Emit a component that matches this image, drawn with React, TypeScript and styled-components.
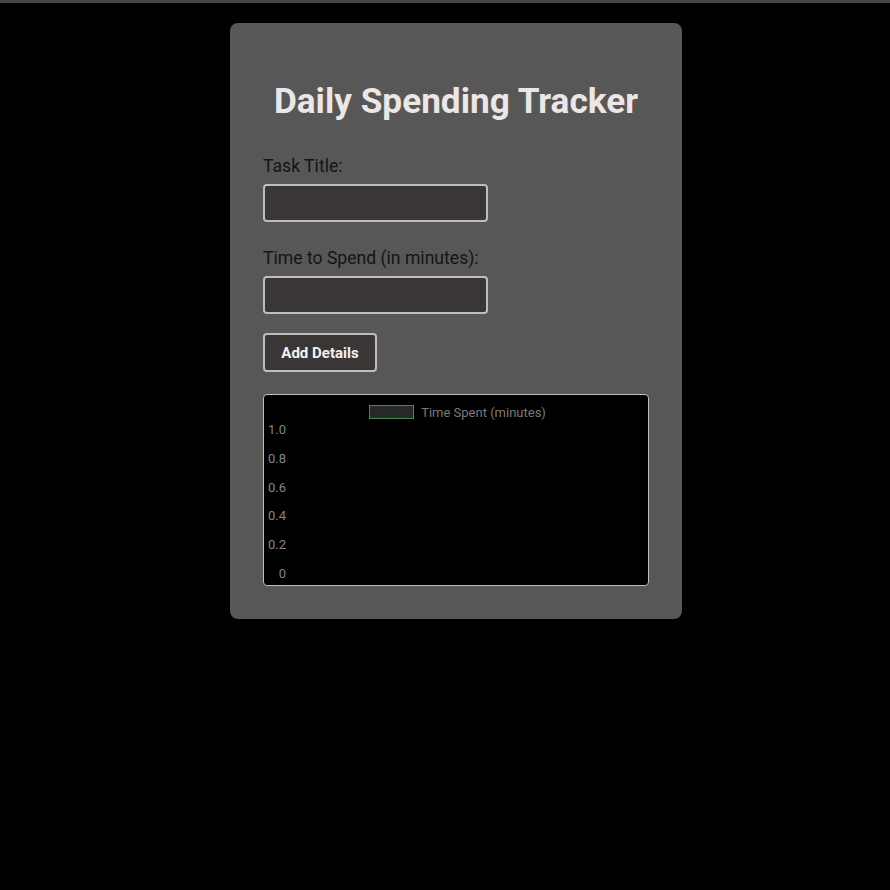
import React from "react"
import styled, { createGlobalStyle } from "styled-components"

const GlobalStyle = createGlobalStyle`
  html, body {
    margin: 0;
    padding: 0;
    background: #000;
    font-family: Roboto, "Liberation Sans", sans-serif;
  }
  body {
    border-top: 3px solid #444;
  }
`

const Page = styled.main`
  display: flex;
  justify-content: center;
  align-items: flex-start;
  padding: 20px 0 0 22px;
  min-height: 860px;
`

const Card = styled.section`
  width: 386px;
  padding: 60px 33px 33px;
  background-color: #575757;
  border-radius: 8px;
  display: flex;
  flex-direction: column;
`

const Heading = styled.h1`
  margin: 0 0 36px;
  font-size: 35.2px;
  line-height: 37px;
  font-weight: 700;
  color: #ece6e6;
  text-align: center;
  white-space: nowrap;
`

const Field = styled.div`
  display: flex;
  flex-direction: column;
  align-items: flex-start;
  margin-bottom: 26px;
`

const Label = styled.label`
  font-size: 17.6px;
  line-height: 21px;
  color: #141414;
  margin-bottom: 7px;
`

const Input = styled.input`
  box-sizing: border-box;
  width: 225px;
  height: 38px;
  background: #3a3636;
  border: 2px solid #bdbdbd;
  border-radius: 4px;
  color: #eee;
  font-size: 16px;
  padding: 0 8px;
  outline: none;
`

const Button = styled.button`
  align-self: flex-start;
  box-sizing: border-box;
  width: 114px;
  height: 39px;
  margin-top: -7px;
  margin-bottom: 22px;
  background: #3a3636;
  border: 2px solid #bdbdbd;
  border-radius: 4px;
  color: #f2f2f2;
  font-family: Roboto, "Liberation Sans", sans-serif;
  font-size: 15px;
  font-weight: 700;
  cursor: pointer;
`

const Chart = styled.div`
  box-sizing: border-box;
  height: 192px;
  background: #000;
  border: 1px solid #bdbdbd;
  border-radius: 4px;
  padding: 9px 0 0 3px;
  display: flex;
  flex-direction: column;
`

const Legend = styled.div`
  display: flex;
  justify-content: center;
  align-items: center;
  gap: 7px;
  font-size: 13px;
  color: #7a7a7a;
  height: 16px;
`

const LegendSwatch = styled.span`
  box-sizing: border-box;
  width: 45px;
  height: 14px;
  background: #262a26;
  border: 1px solid #4a8a4a;
`

const Axis = styled.div`
  display: flex;
  flex-direction: column;
  justify-content: space-between;
  align-items: flex-end;
  width: 18px;
  margin: 2px 0 0 1px;
  height: 160px;
`

const Tick = styled.span`
  font-size: 13px;
  line-height: 16px;
  color: #858585;
`

const ticks = ["1.0", "0.8", "0.6", "0.4", "0.2", "0"]

export default function App() {
  return (
    <>
      <GlobalStyle />
      <Page>
        <Card>
          <Heading>Daily Spending Tracker</Heading>
          <Field>
            <Label>Task Title:</Label>
            <Input type="text" />
          </Field>
          <Field>
            <Label>Time to Spend (in minutes):</Label>
            <Input type="number" />
          </Field>
          <Button>Add Details</Button>
          <Chart>
            <Legend>
              <LegendSwatch />
              <span>Time Spent (minutes)</span>
            </Legend>
            <Axis>
              {ticks.map((t) => (
                <Tick key={t}>{t}</Tick>
              ))}
            </Axis>
          </Chart>
        </Card>
      </Page>
    </>
  )
}
